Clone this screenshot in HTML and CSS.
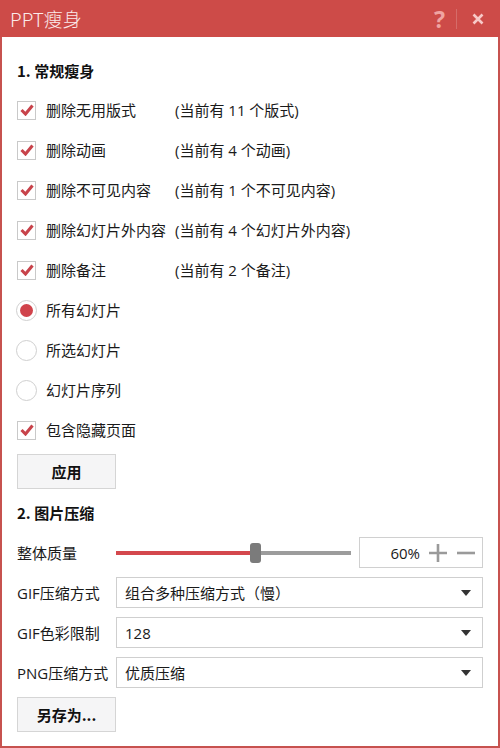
FILE: index.html
```html
<!DOCTYPE html>
<html lang="zh-CN">
<head>
<meta charset="utf-8">
<title>PPT瘦身</title>
<link rel="stylesheet" href="styles.css">
</head>
<body>
<div class="app">
  <div class="titlebar">
    <span class="title">PPT瘦身</span>
    <div class="tools">
      <span class="help">?</span>
      <span class="sep"></span>
      <svg class="close" width="12" height="12" viewBox="0 0 12 12"><path d="M1.5 1.5 L10.5 10.5 M10.5 1.5 L1.5 10.5" stroke="#f7c9c8" stroke-width="2.6" stroke-linecap="butt"/></svg>
    </div>
  </div>
  <div class="content">
    <div class="heading h1">1. 常规瘦身</div>
    <div class="list">
      <div class="row"><span class="check"><svg width="14" height="12" viewBox="0 0 14 12"><path d="M1.5 6 L5.5 10 L12.5 1.5" fill="none" stroke="#c8434b" stroke-width="3.1"/></svg></span><span class="lbl">删除无用版式</span><span class="info">(当前有 11 个版式)</span></div>
      <div class="row"><span class="check"><svg width="14" height="12" viewBox="0 0 14 12"><path d="M1.5 6 L5.5 10 L12.5 1.5" fill="none" stroke="#c8434b" stroke-width="3.1"/></svg></span><span class="lbl">删除动画</span><span class="info">(当前有 4 个动画)</span></div>
      <div class="row"><span class="check"><svg width="14" height="12" viewBox="0 0 14 12"><path d="M1.5 6 L5.5 10 L12.5 1.5" fill="none" stroke="#c8434b" stroke-width="3.1"/></svg></span><span class="lbl">删除不可见内容</span><span class="info">(当前有 1 个不可见内容)</span></div>
      <div class="row"><span class="check"><svg width="14" height="12" viewBox="0 0 14 12"><path d="M1.5 6 L5.5 10 L12.5 1.5" fill="none" stroke="#c8434b" stroke-width="3.1"/></svg></span><span class="lbl">删除幻灯片外内容</span><span class="info">(当前有 4 个幻灯片外内容)</span></div>
      <div class="row"><span class="check"><svg width="14" height="12" viewBox="0 0 14 12"><path d="M1.5 6 L5.5 10 L12.5 1.5" fill="none" stroke="#c8434b" stroke-width="3.1"/></svg></span><span class="lbl">删除备注</span><span class="info">(当前有 2 个备注)</span></div>
      <div class="row"><span class="radio on"></span><span class="lbl">所有幻灯片</span></div>
      <div class="row"><span class="radio"></span><span class="lbl">所选幻灯片</span></div>
      <div class="row"><span class="radio"></span><span class="lbl">幻灯片序列</span></div>
      <div class="row"><span class="check"><svg width="14" height="12" viewBox="0 0 14 12"><path d="M1.5 6 L5.5 10 L12.5 1.5" fill="none" stroke="#c8434b" stroke-width="3.1"/></svg></span><span class="lbl">包含隐藏页面</span></div>
    </div>
    <button class="btn apply">应用</button>
    <div class="heading h2">2. 图片压缩</div>
    <div class="form">
      <div class="frow">
        <span class="flabel">整体质量</span>
        <div class="slider">
          <div class="track"><div class="fill" style="width:134px"></div></div>
          <div class="thumb"></div>
        </div>
        <div class="qbox">
          <span class="qval">60%</span>
          <svg class="plus" width="18" height="18" viewBox="0 0 18 18"><path d="M0 9 H18 M9 0 V18" stroke="#9a9a9a" stroke-width="2.6"/></svg>
          <svg class="minus" width="18" height="18" viewBox="0 0 18 18"><path d="M0 9 H18" stroke="#9a9a9a" stroke-width="2.6"/></svg>
        </div>
      </div>
      <div class="frow">
        <span class="flabel">GIF压缩方式</span>
        <div class="select"><span>组合多种压缩方式（慢）</span><span class="arrow"></span></div>
      </div>
      <div class="frow">
        <span class="flabel">GIF色彩限制</span>
        <div class="select"><span>128</span><span class="arrow"></span></div>
      </div>
      <div class="frow">
        <span class="flabel">PNG压缩方式</span>
        <div class="select"><span>优质压缩</span><span class="arrow"></span></div>
      </div>
      <button class="btn save">另存为...</button>
    </div>
  </div>
</div>
</body>
</html>
```
FILE: styles.css
```css
* { box-sizing: border-box; }
html, body { margin: 0; padding: 0; background: #fff; }
body {
  font-family: "Open Sans", "Noto Sans CJK SC", sans-serif;
  font-size: 15px;
  color: #1a1a1a;
}
.app {
  width: 500px;
  height: 748px;
  display: flex;
  flex-direction: column;
}
.titlebar {
  height: 37px;
  background: #cd4b48;
  display: flex;
  align-items: center;
  justify-content: space-between;
  padding: 0 16px 0 10px;
  flex: none;
}
.title {
  color: #fbeaea;
  font-family: "Noto Sans CJK SC", sans-serif;
  font-size: 19px;
  font-weight: 300;
  line-height: 1;
}
.tools {
  display: flex;
  align-items: center;
}
.help {
  color: #f0a4a2;
  font-family: "Noto Sans", sans-serif;
  font-weight: 700;
  font-size: 23px;
  line-height: 1;
  margin-right: 11px;
  margin-top: 1px;
}
.sep {
  width: 1px;
  height: 20px;
  background: #d56c69;
  margin-right: 15px;
}
.close { display: block; }
.content {
  flex: 1;
  border: 2px solid #c7524f;
  border-top: 0;
  padding: 0 15px;
  display: flex;
  flex-direction: column;
  align-items: flex-start;
}
.heading {
  font-family: "Noto Sans CJK SC", sans-serif;
  font-weight: 700;
  font-size: 15px;
  line-height: 20px;
  color: #111;
}
.h1 { margin-top: 24px; margin-bottom: 9px; }
.h2 { margin-top: 14px; margin-bottom: 14px; }
.list { display: flex; flex-direction: column; }
.row {
  height: 40px;
  display: flex;
  align-items: center;
  line-height: 20px;
}
.check {
  width: 19px;
  height: 19px;
  border: 1px solid #c9c9c9;
  background: #fff;
  display: flex;
  align-items: center;
  justify-content: center;
  margin-right: 10px;
}
.check svg { display: block; }
.radio {
  width: 21px;
  height: 21px;
  border-radius: 50%;
  border: 1px solid #cfcfcf;
  margin-left: -1px;
  margin-right: 9px;
  display: flex;
  align-items: center;
  justify-content: center;
}
.radio.on::after {
  content: "";
  width: 13px;
  height: 13px;
  border-radius: 50%;
  background: #d0434b;
}
.lbl { width: 129px; font-family: "Noto Sans CJK SC", sans-serif; }
.info { white-space: nowrap; }
.btn {
  width: 99px;
  height: 35px;
  border: 1px solid #d5d5d5;
  background: #f5f5f6;
  font-family: "Noto Sans CJK SC", sans-serif;
  font-weight: 700;
  font-size: 15px;
  color: #111;
  padding: 0;
}
.apply { margin-top: 4px; }
.form {
  display: flex;
  flex-direction: column;
  gap: 9px;
  width: 100%;
}
.frow {
  display: flex;
  align-items: center;
  height: 31px;
}
.flabel {
  width: 99px;
  flex: none;
  white-space: nowrap;
}
.slider {
  position: relative;
  width: 235px;
  height: 31px;
  display: flex;
  align-items: center;
  flex: none;
}
.track {
  width: 100%;
  height: 4px;
  background: #9c9c9c;
}
.fill {
  height: 4px;
  background: #d4484d;
}
.thumb {
  position: absolute;
  left: 134px;
  top: 6px;
  width: 11px;
  height: 20px;
  border-radius: 3px;
  background: #7b7b7b;
}
.qbox {
  margin-left: 8px;
  width: 125px;
  height: 31px;
  border: 1px solid #d0d0d0;
  display: flex;
  align-items: center;
  justify-content: flex-end;
  padding-right: 7px;
}
.qval { margin-right: 9px; }
.plus { margin-right: 10px; display: block; }
.minus { display: block; }
.select {
  flex: 1;
  height: 31px;
  border: 1px solid #cfcfcf;
  display: flex;
  align-items: center;
  justify-content: space-between;
  padding: 0 11px 0 8px;
}
.arrow {
  width: 0;
  height: 0;
  border-left: 5px solid transparent;
  border-right: 5px solid transparent;
  border-top: 6px solid #333;
}
.save { margin-top: 0; }
```
